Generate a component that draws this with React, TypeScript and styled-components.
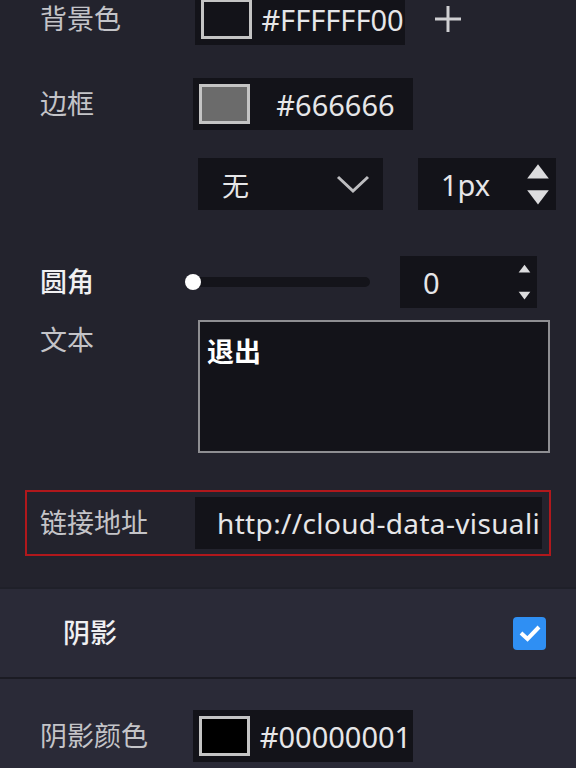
import styled, { createGlobalStyle } from "styled-components";

const GlobalStyle = createGlobalStyle`
    html, body {
        margin: 0;
        padding: 0;
        background: #23232d;
    }
    body {
        font-family: "Noto Sans", "Noto Sans CJK SC", sans-serif;
        color: #c8c8cc;
    }
    #root {
        height: 768px;
        overflow: hidden;
    }
`;

const Panel = styled.div`
    display: flex;
    flex-direction: column;
    margin-top: -7px;
`;

const Row = styled.div<{ $top: number; $align?: string }>`
    display: flex;
    align-items: ${(p) => p.$align || "center"};
    margin-top: ${(p) => p.$top}px;
    padding-left: 40px;
`;

const Label = styled.div<{ $strong?: boolean; $width?: number }>`
    width: ${(p) => p.$width ?? 153}px;
    flex-shrink: 0;
    font-size: 27px;
    line-height: 36px;
    color: ${(p) => (p.$strong ? "#f0f0f2" : "#c4c4c8")};
    font-weight: ${(p) => (p.$strong ? 500 : 400)};
    white-space: nowrap;
`;

const ColorBox = styled.div<{ $width: number }>`
    display: flex;
    align-items: center;
    width: ${(p) => p.$width}px;
    height: 52px;
    padding-left: 6px;
    box-sizing: border-box;
    background: #131319;
`;

const Swatch = styled.div<{ $fill: string }>`
    width: 51px;
    height: 40px;
    box-sizing: border-box;
    border: 3px solid #c4c4c4;
    background: ${(p) => p.$fill};
    flex-shrink: 0;
`;

const ColorText = styled.span`
    flex: 1;
    text-align: center;
    padding-left: 8px;
    font-size: 29px;
    color: #e6e6e8;
    white-space: nowrap;
`;

const PlusButton = styled.div`
    margin-left: 28px;
    width: 30px;
    height: 30px;
    display: flex;
`;

const SelectBox = styled.div`
    display: flex;
    align-items: center;
    justify-content: space-between;
    width: 185px;
    height: 52px;
    padding: 0 13px 0 24px;
    box-sizing: border-box;
    background: #131319;
    font-size: 27px;
    color: #e6e6e8;
`;

const NumberBox = styled.div<{ $width: number; $gap: number }>`
    display: flex;
    align-items: center;
    justify-content: space-between;
    width: ${(p) => p.$width}px;
    height: 52px;
    margin-left: ${(p) => p.$gap}px;
    padding-left: 23px;
    padding-right: 6px;
    box-sizing: border-box;
    background: #131319;
    font-size: 29px;
    color: #e6e6e8;
`;

const Spinner = styled.div<{ $gap: number }>`
    display: flex;
    flex-direction: column;
    align-items: center;
    gap: ${(p) => p.$gap}px;
`;

const Slider = styled.div`
    position: relative;
    width: 177px;
    height: 10px;
    border-radius: 5px;
    background: #14141a;
`;

const Knob = styled.div`
    position: absolute;
    left: -8px;
    top: -3px;
    width: 16px;
    height: 16px;
    border-radius: 50%;
    background: #ffffff;
`;

const TextArea = styled.div`
    width: 352px;
    height: 133px;
    margin-left: 5px;
    box-sizing: border-box;
    border: 2px solid #8e8e92;
    background: #131319;
    padding: 12px 7px;
    font-size: 27px;
    font-weight: 700;
    color: #ffffff;
    line-height: 36px;
`;

const Highlight = styled.div`
    display: flex;
    align-items: center;
    width: 526px;
    margin: 37px 0 0 25px;
    padding: 5px 7px 5px 13px;
    box-sizing: border-box;
    border: 2px solid #b0181c;
`;

const UrlInput = styled.div`
    flex: 1;
    height: 52px;
    display: flex;
    align-items: center;
    padding-left: 22px;
    background: #131319;
    font-size: 28px;
    letter-spacing: 0.35px;
    color: #e6e6e8;
    white-space: nowrap;
`;

const Section = styled.div`
    display: flex;
    align-items: center;
    justify-content: space-between;
    margin-top: 31px;
    height: 88px;
    padding: 0 30px 0 63px;
    background: #2a2a37;
    border-top: 2px solid #1f2029;
    border-bottom: 2px solid #1b1b23;
`;

const Checkbox = styled.div`
    width: 33px;
    height: 33px;
    border-radius: 4px;
    background: #2f8ff3;
    display: flex;
    align-items: center;
    justify-content: center;
`;

const Lower = styled.div`
    background: #2a2a37;
    padding-bottom: 40px;
`;

function TriangleUp({ size }: { size: number }) {
    return (
        <svg width={size} height={size * 0.7} viewBox="0 0 10 7">
            <path d="M5 0.5 L9.5 6.5 L0.5 6.5 Z" fill="#dcdcde" />
        </svg>
    );
}

function TriangleDown({ size }: { size: number }) {
    return (
        <svg width={size} height={size * 0.7} viewBox="0 0 10 7">
            <path d="M0.5 0.5 L9.5 0.5 L5 6.5 Z" fill="#dcdcde" />
        </svg>
    );
}

export default function App() {
    return (
        <>
            <GlobalStyle />
            <Panel>
                <Row $top={0}>
                    <Label $width={155}>背景色</Label>
                    <ColorBox $width={210}>
                        <Swatch $fill="#131319" />
                        <ColorText>#FFFFFF00</ColorText>
                    </ColorBox>
                    <PlusButton>
                        <svg width="30" height="30" viewBox="0 0 30 30">
                            <path d="M15 2 V28 M2 15 H28" stroke="#cfcfd2" strokeWidth="3" />
                        </svg>
                    </PlusButton>
                </Row>
                <Row $top={33}>
                    <Label>边框</Label>
                    <ColorBox $width={220}>
                        <Swatch $fill="#6b6b6b" />
                        <ColorText>#666666</ColorText>
                    </ColorBox>
                </Row>
                <Row $top={28}>
                    <Label $width={158} />
                    <SelectBox>
                        <span>无</span>
                        <svg width="34" height="20" viewBox="0 0 34 20">
                            <path d="M2 3 L17 17 L32 3" fill="none" stroke="#bdbdc0" strokeWidth="3" />
                        </svg>
                    </SelectBox>
                    <NumberBox $width={138} $gap={35}>
                        <span>1px</span>
                        <Spinner $gap={9}>
                            <TriangleUp size={24} />
                            <TriangleDown size={24} />
                        </Spinner>
                    </NumberBox>
                </Row>
                <Row $top={46}>
                    <Label $strong>圆角</Label>
                    <Slider>
                        <Knob />
                    </Slider>
                    <NumberBox $width={137} $gap={30}>
                        <span>0</span>
                        <Spinner $gap={18}>
                            <TriangleUp size={13} />
                            <TriangleDown size={13} />
                        </Spinner>
                    </NumberBox>
                </Row>
                <Row $top={12} $align="flex-start">
                    <Label>
                        <div style={{ paddingTop: 2 }}>文本</div>
                    </Label>
                    <TextArea>退出</TextArea>
                </Row>
                <Highlight>
                    <Label $width={155}>链接地址</Label>
                    <UrlInput>http://cloud-data-visuali</UrlInput>
                </Highlight>
                <Section>
                    <Label $strong>阴影</Label>
                    <Checkbox>
                        <svg width="24" height="20" viewBox="0 0 24 20">
                            <path d="M3 10 L9.5 16 L21 4" fill="none" stroke="#ffffff" strokeWidth="4" />
                        </svg>
                    </Checkbox>
                </Section>
                <Lower>
                    <Row $top={31}>
                        <Label>阴影颜色</Label>
                        <ColorBox $width={220}>
                            <Swatch $fill="#000000" />
                            <ColorText>#00000001</ColorText>
                        </ColorBox>
                    </Row>
                </Lower>
            </Panel>
        </>
    );
}
